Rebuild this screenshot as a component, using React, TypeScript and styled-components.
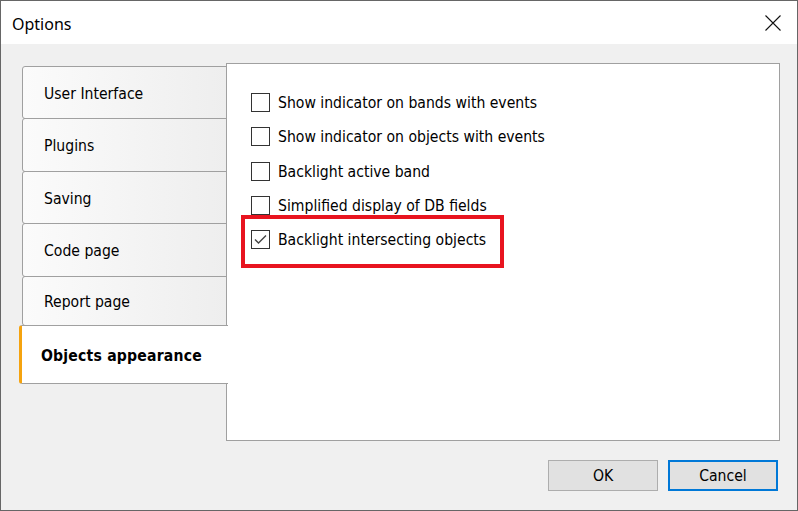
import React from 'react';
import styled, { createGlobalStyle } from 'styled-components';

const GlobalStyle = createGlobalStyle`
  html, body {
    margin: 0;
    padding: 0;
    background: #f0f0f0;
  }
  * {
    box-sizing: border-box;
  }
`;

const uiFont = `"DejaVu Sans Condensed", "DejaVu Sans", Tahoma, sans-serif`;

const Window = styled.div`
  width: 798px;
  height: 511px;
  border: 1px solid #666;
  background: #f0f0f0;
  display: flex;
  flex-direction: column;
  font-family: ${uiFont};
  color: #000;
  overflow: hidden;
`;

const TitleBar = styled.div`
  height: 43px;
  flex-shrink: 0;
  background: #fff;
  display: flex;
  align-items: center;
  justify-content: space-between;
  padding: 0 16px 0 11px;
`;

const Title = styled.span`
  font-family: "Noto Sans", "Open Sans", sans-serif;
  font-size: 16px;
  padding-top: 2px;
`;

const CloseButton = styled.div`
  width: 16px;
  height: 16px;
  display: flex;
  align-items: center;
  justify-content: center;
`;

const Body = styled.div`
  flex: 1;
  display: flex;
  flex-direction: column;
  padding: 19px 17px 0 18px;
`;

const Main = styled.div`
  display: flex;
  align-items: flex-start;
`;

const TabList = styled.div`
  width: 208px;
  margin-top: 3px;
  display: flex;
  flex-direction: column;
  position: relative;
  z-index: 1;
`;

const Tab = styled.div<{ $active?: boolean; $h: number }>`
  height: ${p => p.$h}px;
  margin-top: -1px;
  margin-left: ${p => (p.$active ? '0' : '3px')};
  margin-right: ${p => (p.$active ? '-1px' : '0')};
  display: flex;
  align-items: center;
  padding: 2px 0 0 ${p => (p.$active ? '19px' : '21px')};
  font-size: 15.6px;
  font-weight: ${p => (p.$active ? 'bold' : 'normal')};
  letter-spacing: ${p => (p.$active ? '0.2px' : '0')};
  background: ${p => (p.$active ? '#fff' : 'linear-gradient(to right, #fbfbfb, #eeeeee)')};
  border: 1px solid #a0a0a0;
  border-left: ${p => (p.$active ? '3px solid #f5a30f' : '1px solid #a0a0a0')};
  border-right: ${p => (p.$active ? 'none' : '1px solid #a0a0a0')};
  border-radius: 3px 0 0 3px;
  &:first-child {
    margin-top: 0;
  }
`;

const Panel = styled.div`
  flex: 1;
  height: 378px;
  margin-left: -1px;
  background: #fff;
  border: 1px solid #a0a0a0;
  padding: 29px 0 0 24px;
  position: relative;
`;

const Row = styled.label`
  height: 34.25px;
  display: flex;
  align-items: flex-start;
  gap: 8px;
  font-size: 15.6px;
`;

const Box = styled.span`
  width: 19px;
  height: 19px;
  flex-shrink: 0;
  border: 1px solid #333;
  background: #fff;
  display: flex;
  align-items: center;
  justify-content: center;
`;

const RowText = styled.span`
  line-height: 19px;
  margin-top: 1px;
`;

const Highlight = styled.div`
  position: absolute;
  left: 14px;
  top: 151px;
  width: 263px;
  height: 53px;
  border: 4px solid #e8141f;
  pointer-events: none;
`;

const Footer = styled.div`
  display: flex;
  justify-content: flex-end;
  gap: 10px;
  margin-top: 19px;
  padding-right: 2px;
`;

const Button = styled.button<{ $default?: boolean }>`
  width: 110px;
  height: 31px;
  font-family: ${uiFont};
  font-size: 15.6px;
  color: #000;
  background: #e1e1e1;
  border: ${p => (p.$default ? '2px solid #0078d7' : '1px solid #adadad')};
  padding: 1px 0 0;
`;

const Check = () => (
  <svg width="15" height="15" viewBox="0 0 15 15">
    <path d="M2 7.5 L5.5 11 L13 3.5" fill="none" stroke="#444" strokeWidth="1.4" />
  </svg>
);

const tabs = [
  { label: 'User Interface', h: 53 },
  { label: 'Plugins', h: 54 },
  { label: 'Saving', h: 53 },
  { label: 'Code page', h: 54 },
  { label: 'Report page', h: 50 },
  { label: 'Objects appearance', h: 59, active: true },
];

const options = [
  { text: 'Show indicator on bands with events', checked: false },
  { text: 'Show indicator on objects with events', checked: false },
  { text: 'Backlight active band', checked: false },
  { text: 'Simplified display of DB fields', checked: false },
  { text: 'Backlight intersecting objects', checked: true },
];

const App: React.FC = () => {
  return (
    <>
      <GlobalStyle />
      <Window>
        <TitleBar>
          <Title>Options</Title>
          <CloseButton>
            <svg width="16" height="16" viewBox="0 0 16 16">
              <path d="M0.5 0.5 L15.5 15.5 M15.5 0.5 L0.5 15.5" stroke="#111" strokeWidth="1.1" />
            </svg>
          </CloseButton>
        </TitleBar>
        <Body>
          <Main>
            <TabList>
              {tabs.map(t => (
                <Tab key={t.label} $h={t.h} $active={t.active}>{t.label}</Tab>
              ))}
            </TabList>
            <Panel>
              {options.map(o => (
                <Row key={o.text}>
                  <Box>{o.checked && <Check />}</Box>
                  <RowText>{o.text}</RowText>
                </Row>
              ))}
              <Highlight />
            </Panel>
          </Main>
          <Footer>
            <Button>OK</Button>
            <Button $default>Cancel</Button>
          </Footer>
        </Body>
      </Window>
    </>
  );
};

export default App;
